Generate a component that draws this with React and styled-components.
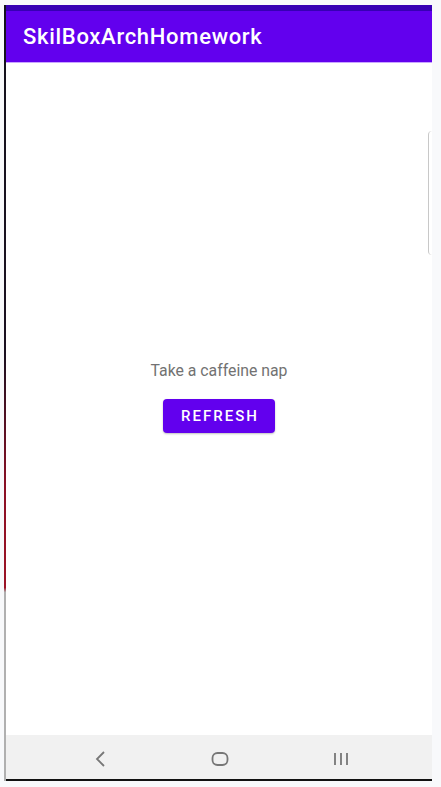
import React from "react";
import styled, { createGlobalStyle } from "styled-components";

const GlobalStyle = createGlobalStyle`
  html, body {
    margin: 0;
    padding: 0;
    background: #f8f9fb;
  }
  body {
    font-family: Roboto, "Noto Sans", sans-serif;
  }
`;

const Phone = styled.div`
  position: relative;
  margin: 5px 0 0 4px;
  width: 428px;
  height: 776px;
  display: flex;
  flex-direction: column;
  box-sizing: border-box;
  border-left: 2px solid #111;
  border-image: linear-gradient(
      #14121c 0%,
      #1a1020 45%,
      #8a0f24 62%,
      #9c1326 75%,
      #b0b0b0 75.6%,
      #b0b0b0 100%
    )
    1;
  background: #fff;
`;

const StatusBar = styled.div`
  height: 6px;
  background: #3700b3;
`;

const Toolbar = styled.header`
  height: 52px;
  background: #6200ee;
  border-bottom: 1px solid #c9a6ff;
  display: flex;
  align-items: center;
  padding-left: 17px;
  box-sizing: border-box;
`;

const Title = styled.h1`
  margin: 0;
  color: #fff;
  font-family: Roboto, sans-serif;
  font-weight: 500;
  font-size: 22px;
  letter-spacing: 0.7px;
`;

const Content = styled.main`
  flex: 1;
  display: flex;
  flex-direction: column;
  align-items: center;
  justify-content: center;
  gap: 19px;
  padding-bottom: 4px;
`;

const Message = styled.p`
  margin: 0;
  color: #727272;
  font-family: Roboto, sans-serif;
  font-size: 15.8px;
  line-height: 18px;
`;

const Button = styled.button`
  width: 112px;
  height: 34px;
  border: none;
  border-radius: 4px;
  background: #6200ee;
  color: #fff;
  font-family: Roboto, sans-serif;
  font-weight: 500;
  font-size: 15px;
  letter-spacing: 2px;
  box-shadow: 0 1px 2px rgba(0, 0, 0, 0.25);
  padding: 0 0 0 2px;
`;

const Handle = styled.div`
  position: absolute;
  right: 0;
  top: 126px;
  width: 3px;
  height: 124px;
  border-left: 1.5px solid #c8c8c8;
  border-radius: 4px 0 0 4px;
`;

const NavBar = styled.nav`
  height: 46px;
  background: #f1f1f1;
  border-bottom: 2px solid #111;
  display: flex;
  align-items: center;
  justify-content: space-between;
  padding: 3px 82px 0 88px;
  box-sizing: border-box;
`;

const NavIcon = styled.svg`
  display: block;
  fill: none;
  stroke: #777;
  stroke-width: 1.8;
`;

export default function App() {
  return (
    <>
      <GlobalStyle />
      <Phone>
        <StatusBar />
        <Toolbar>
          <Title>SkilBoxArchHomework</Title>
        </Toolbar>
        <Content>
          <Message>Take a caffeine nap</Message>
          <Button>REFRESH</Button>
        </Content>
        <NavBar>
          <NavIcon width="14" height="18" viewBox="0 0 14 18">
            <path d="M10 2 L3 9 L10 16" />
          </NavIcon>
          <NavIcon width="18" height="16" viewBox="0 0 18 16">
            <rect x="1.5" y="2" width="15" height="12" rx="5" />
          </NavIcon>
          <NavIcon width="18" height="16" viewBox="0 0 18 16">
            <path d="M3 2 V14 M9 2 V14 M15 2 V14" />
          </NavIcon>
        </NavBar>
        <Handle />
      </Phone>
    </>
  );
}
